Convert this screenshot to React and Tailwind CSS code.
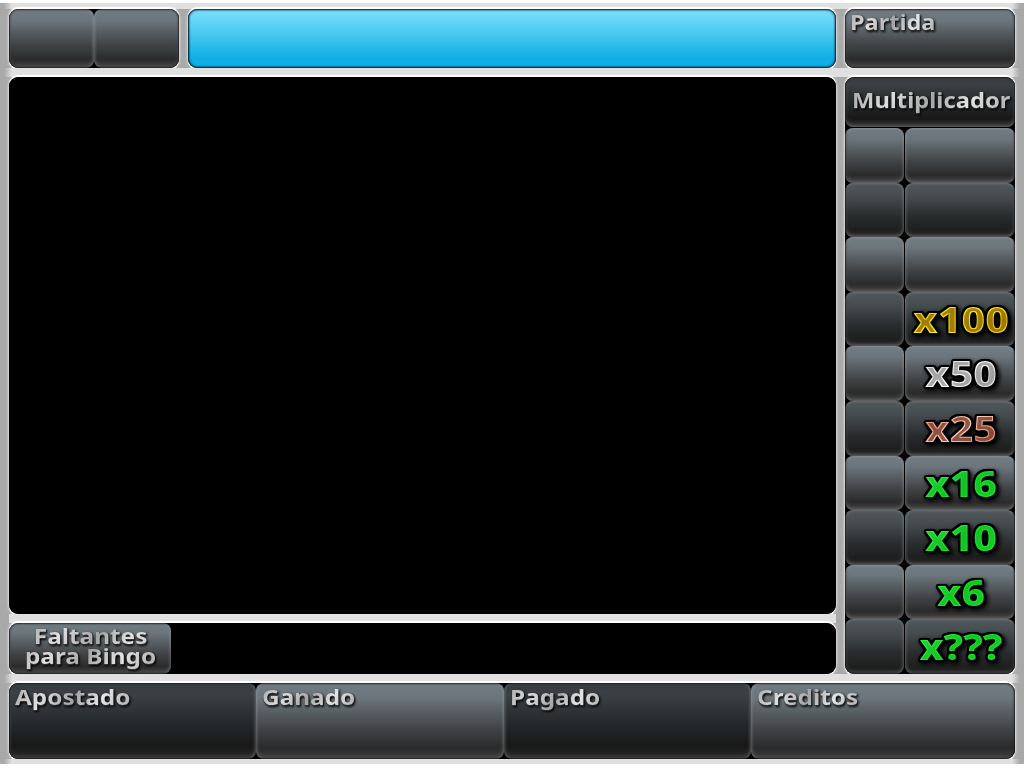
const cellBase = "relative rounded-[8px] shadow-[inset_0_0_3px_1px_rgba(190,195,200,0.25),inset_0_-3px_4px_rgba(130,130,130,0.3)]";
const light = "bg-[linear-gradient(#727c84,#6b757b_20%,#3f4244_62%,#2b2b2b_85%,#383838)]";
const mid = "bg-[linear-gradient(#50585c,#454c4f_25%,#292c2d_62%,#1c1c1c_92%,#292929)]";
const dark = "bg-[linear-gradient(#353b3e,#3a4043_15%,#272b2d_50%,#181818_82%,#272727)]";

function Label({ children, className = "" }) {
  return (
    <span
      className={"block w-fit whitespace-nowrap bg-[linear-gradient(115deg,#a8a8a8,#dedede_25%,#a4a4a4_50%,#e4e4e4_72%,#a8a8a8)] bg-clip-text pb-1 font-['Noto_Sans',sans-serif] font-bold text-transparent [filter:drop-shadow(0_1px_0_#333)_drop-shadow(1px_1px_1px_#000)] " + className}
    >
      {children}
    </span>
  );
}

function Panel({ className = "", children }) {
  return (
    <div className={"rounded-[9px] shadow-[0_-2px_1px_0_#fff,0_2px_1px_0_#fff,0_0_3px_1px_rgba(255,255,255,0.5)] " + className}>
      <div className="relative flex h-full w-full overflow-hidden rounded-[9px] bg-black">
        {children}
        <div className="pointer-events-none absolute inset-0 rounded-[9px] shadow-[inset_0_0_2px_1px_rgba(0,0,0,0.75)]" />
      </div>
    </div>
  );
}

function Multiplier({ text, tone, width }) {
  return (
    <svg className="block h-full w-full overflow-visible" viewBox="0 0 110 54">
      <text
        x={56 - width / 2}
        y="41"
        textLength={width}
        lengthAdjust="spacingAndGlyphs"
        fontFamily="'Noto Sans', sans-serif"
        fontWeight="800"
        fontSize="36"
        fill={"url(#" + tone + ")"}
        filter={"url(#" + tone + "-bevel)"}
      >
        {text}
      </text>
    </svg>
  );
}

const rows = [
  {}, {}, {},
  { text: "x100", tone: "gold", width: 96 },
  { text: "x50", tone: "silver", width: 72 },
  { text: "x25", tone: "bronze", width: 72 },
  { text: "x16", tone: "green", width: 72 },
  { text: "x10", tone: "green", width: 72 },
  { text: "x6", tone: "green", width: 48 },
  { text: "x???", tone: "green", width: 83 },
];

const tones = {
  gold: { colors: ["#fff02c", "#f0d000", "#fff01c", "#e8c400", "#fff020"], core: "#8c6400", opacity: 0.8 },
  silver: { colors: ["#fff", "#dcdcdc", "#fff", "#d8d8d8", "#fff"], core: "#808080", opacity: 0.65 },
  bronze: { colors: ["#f2b294", "#e59a7c", "#ffcdb8", "#e09072", "#f5a885"], core: "#6c3024", opacity: 0.75 },
  green: { colors: ["#14e028", "#2ef040", "#10e020", "#14ec28", "#08ff18"], core: "#18a42a", opacity: 0.5 },
};

function Tones() {
  return (
    <svg className="absolute h-0 w-0">
      <defs>
        {Object.entries(tones).map(([id, tone]) => (
          <linearGradient key={id} id={id} x1="0" y1="0" x2="1" y2="1">
            {tone.colors.map((color, i) => (
              <stop key={i} offset={i / 4} stopColor={color} />
            ))}
          </linearGradient>
        ))}
        {Object.entries(tones).map(([id, tone]) => (
          <filter key={id} id={id + "-bevel"} x="-15%" y="-15%" width="135%" height="135%" colorInterpolationFilters="sRGB">
            <feMorphology in="SourceAlpha" operator="erode" radius="1" result="core" />
            <feFlood floodColor={tone.core} floodOpacity={tone.opacity} />
            <feComposite in2="core" operator="in" result="inner" />
            <feMorphology in="SourceAlpha" operator="dilate" radius="1" />
            <feGaussianBlur stdDeviation="1.2" result="soft" />
            <feComponentTransfer in="soft" result="outline">
              <feFuncA type="linear" slope="6" intercept="-0.4" />
            </feComponentTransfer>
            <feOffset in="outline" dx="2" dy="2" />
            <feGaussianBlur stdDeviation="2" result="shadow" />
            <feMerge>
              <feMergeNode in="shadow" />
              <feMergeNode in="outline" />
              <feMergeNode in="SourceGraphic" />
              <feMergeNode in="inner" />
            </feMerge>
          </filter>
        ))}
      </defs>
    </svg>
  );
}

function Rail({ className }) {
  return <div className={"-mx-[5px] shrink-0 bg-[linear-gradient(90deg,transparent,#e0e0e0_8px,#e0e0e0_calc(100%-8px),transparent)] " + className} />;
}

export default function App() {
  return (
    <main className="flex h-[768px] w-[1024px] flex-col overflow-hidden border-t-[3px] border-b-[4px] border-white bg-[#a9a9a9] px-[9px]">
      <Tones />
      <Rail className="h-[6px]" />
      <div className="grid h-[59px] shrink-0 grid-cols-[170px_648px_170px] gap-x-[9px]">
        <Panel>
          <div className={cellBase + " " + light + " w-[85px]"} />
          <div className={cellBase + " " + light + " w-[85px]"} />
        </Panel>
        <Panel>
          <div className="h-full w-full rounded-[9px] bg-[linear-gradient(#7ddfff,#51cdf3_35%,#0eade4_85%,#12b0e6)] shadow-[inset_0_0_2px_1px_rgba(20,70,95,0.7)]" />
        </Panel>
        <Panel>
          <div className={cellBase + " " + light + " w-full pl-[5px]"}>
            <Label className="origin-left scale-x-[1.12] text-[21px] leading-[26px]">Partida</Label>
          </div>
        </Panel>
      </div>
      <Rail className="h-[9px]" />
      <div className="grid h-[597px] shrink-0 grid-cols-[827px_170px] gap-[9px]">
        <div className="flex flex-col">
          <Panel className="h-[537px]" />
          <div className="h-[9px] bg-[#e0e0e0]" />
          <Panel className="h-[51px]">
            <div className={cellBase + " " + light + " flex w-[162px] justify-center pt-[3px] pl-[2px]"}>
              <Label className="scale-x-[1.16] text-center text-[21px] leading-[20px]">
                Faltantes
                <br />
                para Bingo
              </Label>
            </div>
          </Panel>
        </div>
        <Panel>
          <div className="flex w-full flex-col">
            <div className={cellBase + " " + dark + " h-[50px] shrink-0 pt-[10px] pl-[7px]"}>
              <Label className="origin-left scale-x-[1.13] text-[21px] leading-[26px]">Multiplicador</Label>
            </div>
            <div className="grid flex-1 grid-cols-[59px_110px] grid-rows-10 gap-x-px pt-px">
              {rows.map((row, i) => (
                <div key={i} className="contents">
                  <div className={cellBase + " " + (i % 2 ? mid : light)} />
                  <div className={cellBase + " " + (i % 2 ? mid : light)}>
                    {row.text && <Multiplier {...row} />}
                  </div>
                </div>
              ))}
            </div>
          </div>
        </Panel>
      </div>
      <Rail className="h-[9px]" />
      <Panel className="h-[76px] shrink-0">
        {["Apostado", "Ganado", "Pagado", "Creditos"].map((name, i) => (
          <div key={name} className={cellBase + " " + (i % 2 ? light : dark) + (i === 3 ? " w-[265px]" : " w-[247.3px]") + " shrink-0 pt-px pl-[6px]"}>
            <Label className="origin-left scale-x-[1.16] text-[21px] leading-[26px]">{name}</Label>
          </div>
        ))}
      </Panel>
      <Rail className="h-[5px]" />
    </main>
  );
}
